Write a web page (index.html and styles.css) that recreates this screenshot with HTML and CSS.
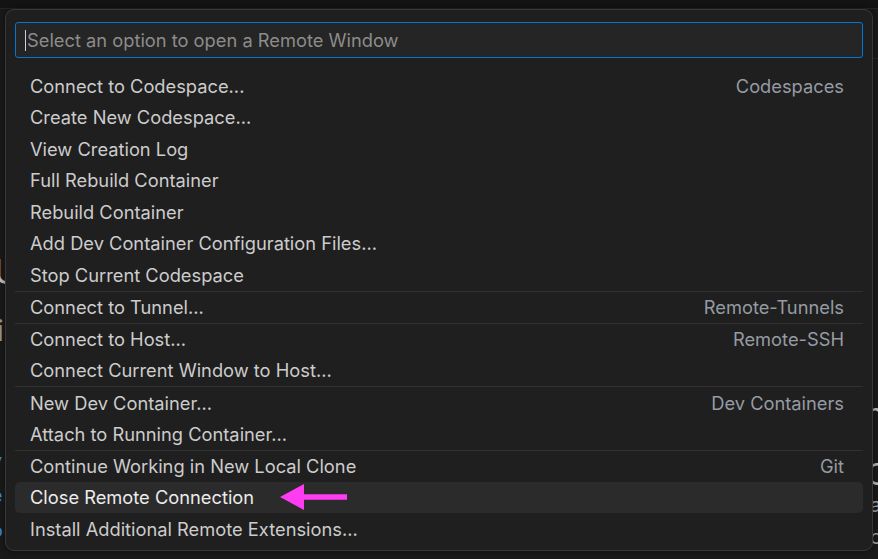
FILE: index.html
```html
<!DOCTYPE html>
<html lang="en">
<head>
<meta charset="utf-8">
<title>Remote Window</title>
<link rel="stylesheet" href="styles.css">
</head>
<body>
<div class="page">
  <div class="topbar"></div>
  <div class="behind">
    <div class="left-peek">
      <span class="pk pk-u">U</span>
      <span class="pk pk-i">i</span>
      <span class="pk pk-v blue">v</span>
      <span class="pk pk-e blue">e</span>
      <span class="pk pk-o blue">o</span>
    </div>
    <div class="right-peek">
      <span class="pk pk-n">n</span>
      <span class="pk pk-c">C</span>
      <span class="pk pk-a">a</span>
      <span class="pk pk-c2">c</span>
    </div>
  </div>

  <div class="quickpick">
    <div class="input">
      <span class="caret"></span><span class="placeholder">Select an option to open a Remote Window</span>
    </div>
    <ul class="list">
      <li class="row"><span class="label">Connect to Codespace...</span><span class="desc">Codespaces</span></li>
      <li class="row"><span class="label">Create New Codespace...</span></li>
      <li class="row"><span class="label">View Creation Log</span></li>
      <li class="row"><span class="label">Full Rebuild Container</span></li>
      <li class="row"><span class="label">Rebuild Container</span></li>
      <li class="row"><span class="label">Add Dev Container Configuration Files...</span></li>
      <li class="row"><span class="label">Stop Current Codespace</span></li>
      <li class="row sep"><span class="label">Connect to Tunnel...</span><span class="desc">Remote-Tunnels</span></li>
      <li class="row sep"><span class="label">Connect to Host...</span><span class="desc">Remote-SSH</span></li>
      <li class="row"><span class="label">Connect Current Window to Host...</span></li>
      <li class="row sep"><span class="label">New Dev Container...</span><span class="desc">Dev Containers</span></li>
      <li class="row"><span class="label">Attach to Running Container...</span></li>
      <li class="row sep"><span class="label">Continue Working in New Local Clone</span><span class="desc">Git</span></li>
      <li class="row active"><span class="label">Close Remote Connection</span>
        <svg class="arrow" width="68" height="28" viewBox="0 0 68 28"><polygon points="0,14 24,1 24,11.2 67,11.2 67,16.8 24,16.8 24,27" fill="#ff3cf2"/></svg>
      </li>
      <li class="row"><span class="label">Install Additional Remote Extensions...</span></li>
    </ul>
  </div>
</div>
</body>
</html>
```

FILE: styles.css
```css
html, body {
  margin: 0;
  padding: 0;
  background: #181818;
  font-family: "Inter", "Open Sans", "Liberation Sans", sans-serif;
}

.page {
  position: relative;
  width: 878px;
  height: 559px;
  overflow: hidden;
  background: #1a1a1a;
}

.topbar {
  height: 8px;
  background: #141414;
  border-bottom: 1px solid #262626;
}

.behind {
  position: relative;
  height: 550px;
}

.pk {
  position: absolute;
  font-size: 22px;
  line-height: 1;
  color: #b8b8b8;
}

.blue { color: #3b8eea; font-size: 18px; }

.pk-u { left: -6px; top: 246px; font-size: 34px; color: #c8c8c8; }
.pk-i { left: -3px; top: 308px; font-size: 28px; color: #9a9a9a; }
.pk-v { left: -8px; top: 443px; }
.pk-e { left: -8px; top: 478px; }
.pk-o { left: -8px; top: 513px; }

.pk-n { left: 866px; top: 390px; font-size: 30px; color: #c0c0c0; }
.pk-c { left: 866px; top: 450px; font-size: 30px; color: #c0c0c0; }
.pk-a { left: 870px; top: 486px; font-size: 20px; color: #a8a8a8; }
.pk-c2 { left: 870px; top: 518px; font-size: 20px; color: #a8a8a8; }

.right-peek::before {
  content: "";
  position: absolute;
  left: 860px;
  top: 49px;
  width: 20px;
  height: 1px;
  background: #2a2a2a;
}

.quickpick {
  position: absolute;
  left: 5px;
  top: 9px;
  width: 868px;
  height: 542px;
  box-sizing: border-box;
  background: #1f1f1f;
  border: 1px solid #383838;
  border-radius: 9px;
  padding: 12px 9px 6px 9px;
  box-shadow: 0 0 8px rgba(0,0,0,0.5);
}

.input {
  height: 36px;
  box-sizing: border-box;
  border: 1px solid #0078d4;
  border-radius: 3px;
  background: #252525;
  display: flex;
  align-items: center;
  padding-left: 9px;
}

.caret {
  width: 1px;
  height: 21px;
  background: #d0d0d0;
  margin-right: 1px;
}

.placeholder {
  font-size: 18.3px;
  color: #8c8c8c;
}

.list {
  list-style: none;
  margin: 12px 0 0 0;
  padding: 0;
}

.row {
  position: relative;
  height: 31.5px;
  box-sizing: border-box;
  display: flex;
  align-items: center;
  justify-content: space-between;
  padding: 0 19px 0 15px;
  font-size: 18.3px;
  color: #cccccc;
  border-radius: 5px;
}

.row.sep {
  border-top: 1px solid #313131;
  border-radius: 0;
  height: 32px;
}

.label { white-space: nowrap; }

.desc {
  color: #969ba3;
  white-space: nowrap;
}

.row.active {
  background: #2b2b2b;
  color: #ececec;
  justify-content: flex-start;
}

.arrow {
  margin-left: 26px;
  flex: none;
}
```
